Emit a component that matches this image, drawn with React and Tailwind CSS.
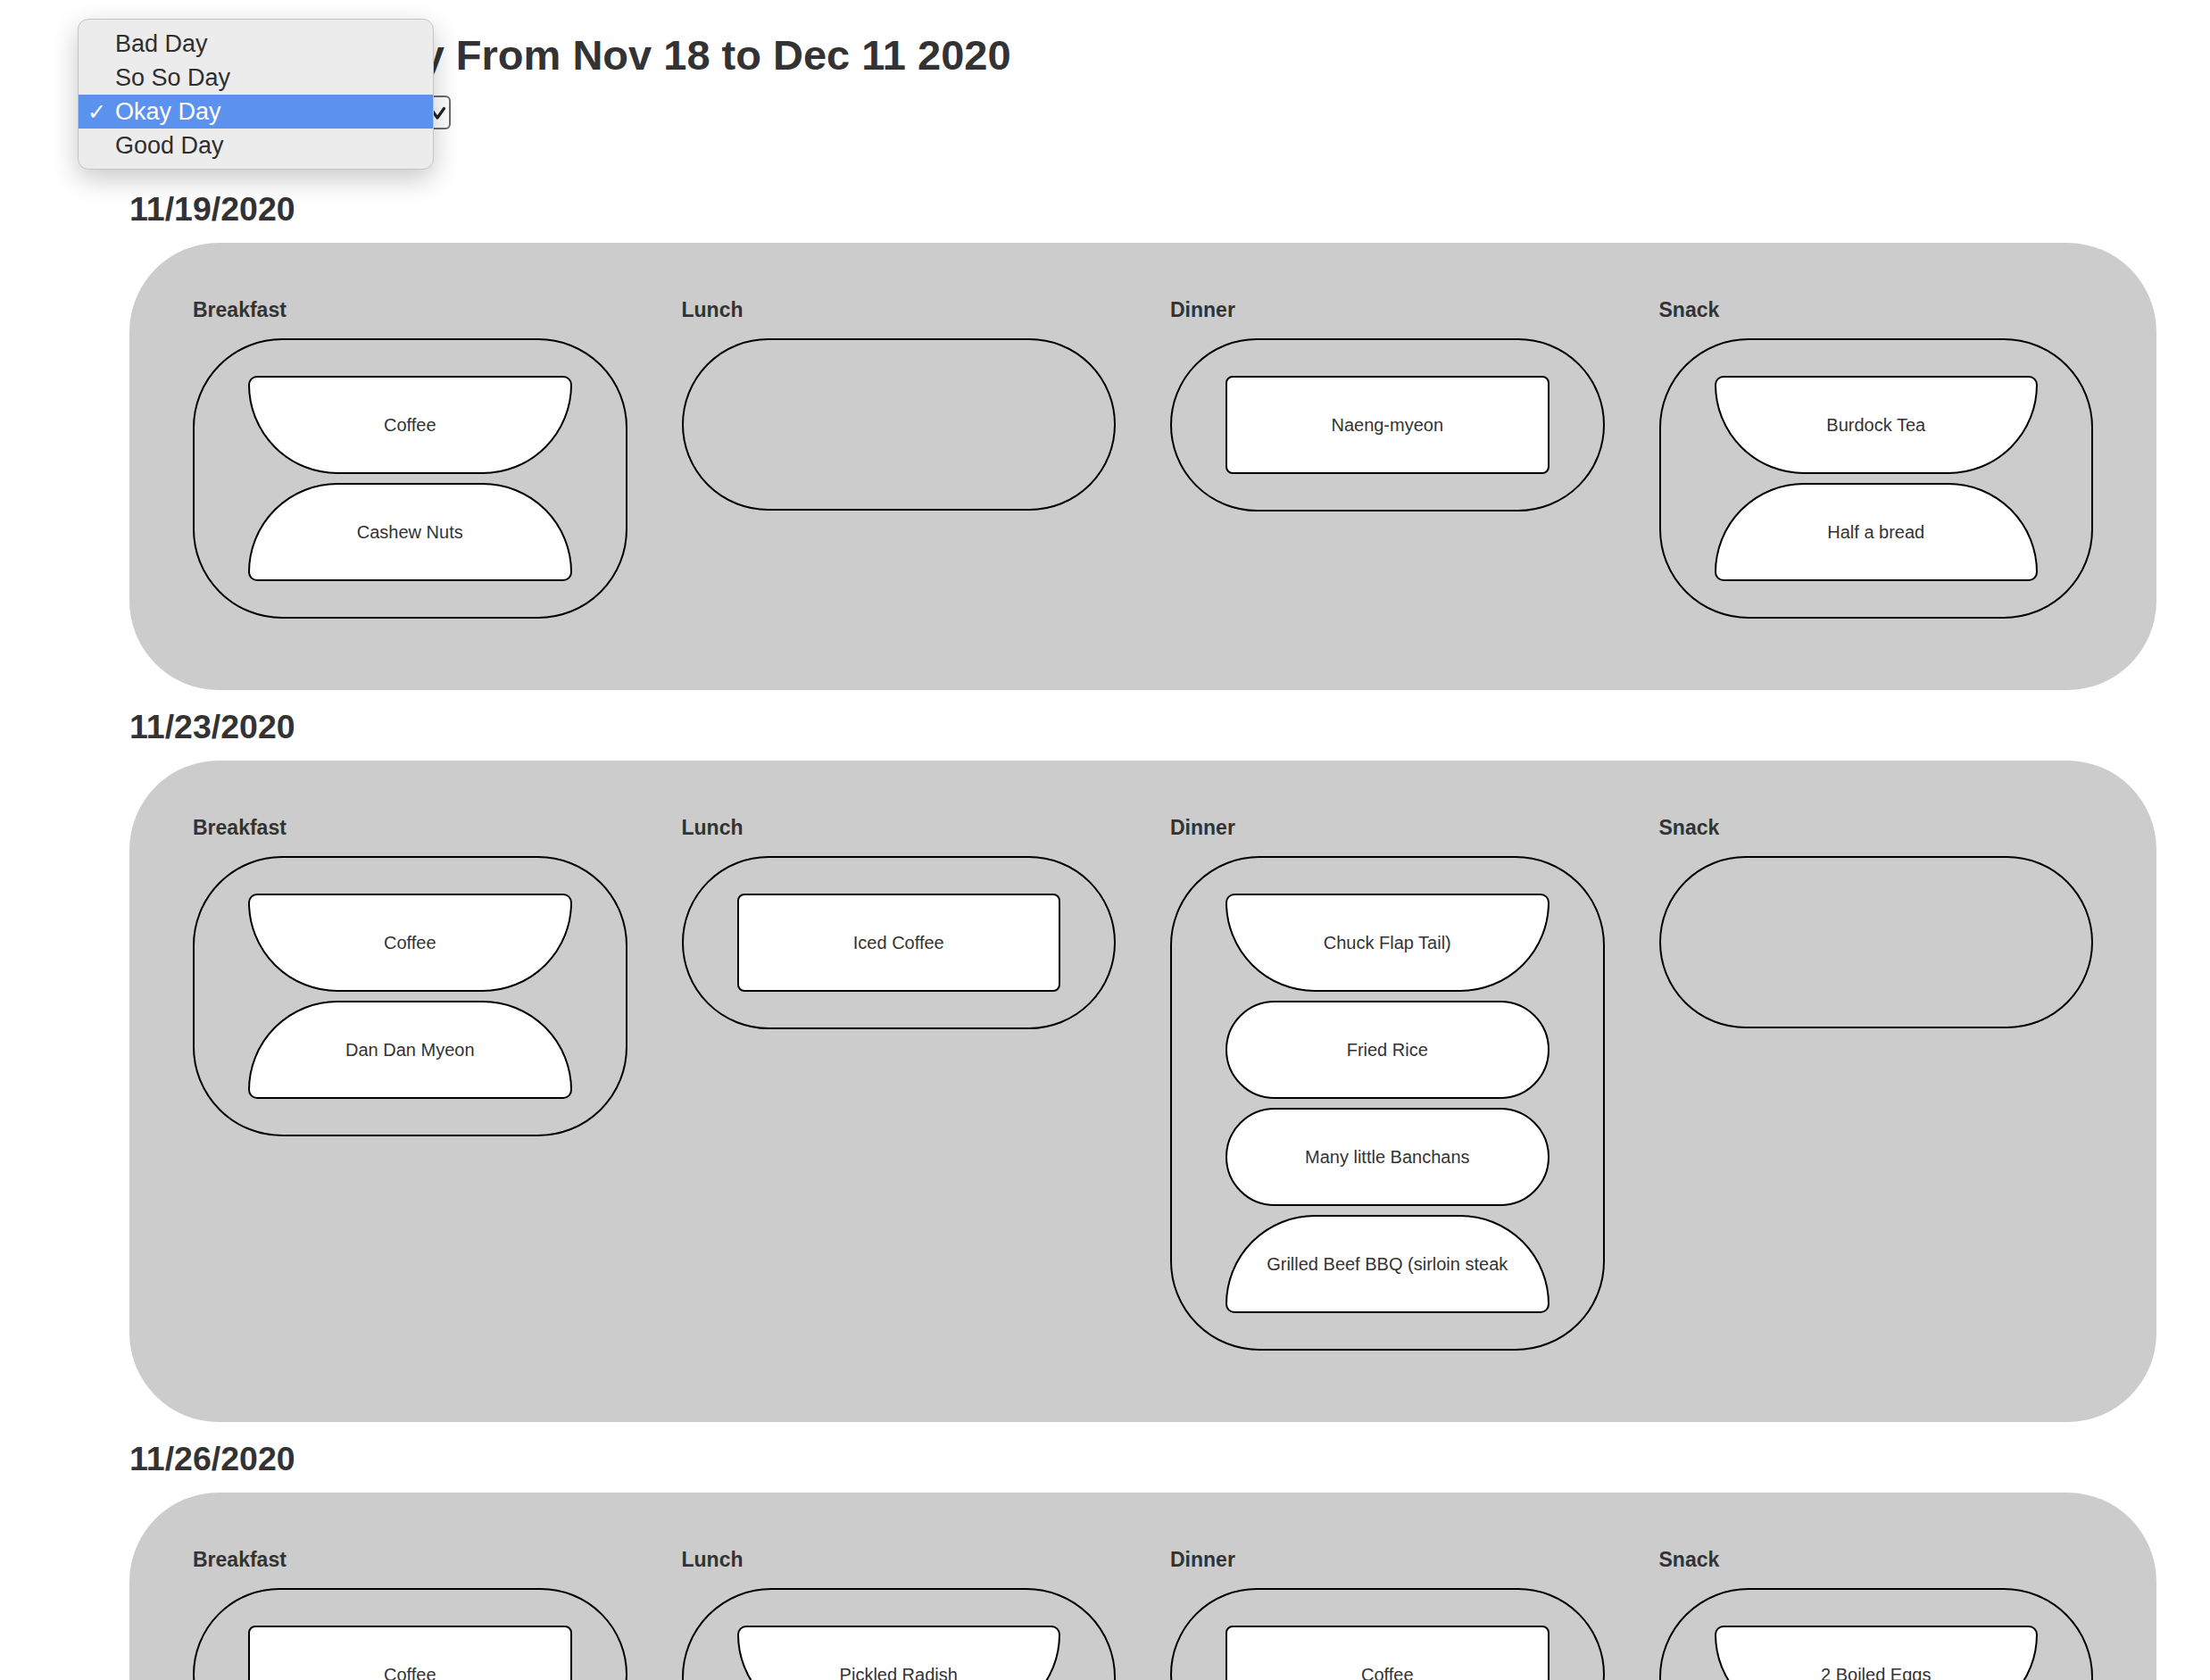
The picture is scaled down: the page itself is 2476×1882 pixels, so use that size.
import React from "react";

const days = [
  {
    date: "11/19/2020",
    meals: [
      { name: "Breakfast", items: ["Coffee", "Cashew Nuts"] },
      { name: "Lunch", items: [] },
      { name: "Dinner", items: ["Naeng-myeon"] },
      { name: "Snack", items: ["Burdock Tea", "Half a bread"] },
    ],
  },
  {
    date: "11/23/2020",
    meals: [
      { name: "Breakfast", items: ["Coffee", "Dan Dan Myeon"] },
      { name: "Lunch", items: ["Iced Coffee"] },
      {
        name: "Dinner",
        items: ["Chuck Flap Tail)", "Fried Rice", "Many little Banchans", "Grilled Beef BBQ (sirloin steak"],
      },
      { name: "Snack", items: [] },
    ],
  },
  {
    date: "11/26/2020",
    meals: [
      { name: "Breakfast", items: ["Coffee"] },
      { name: "Lunch", items: ["Pickled Radish", "Jjajangmyeon"] },
      { name: "Dinner", items: ["Coffee"] },
      { name: "Snack", items: ["2 Boiled Eggs", "Apple"] },
    ],
  },
];

function shapeClass(i, n) {
  if (n === 1) return "rounded-[8px]";
  if (i === 0) return "rounded-t-[10px] rounded-b-[100px]";
  if (i === n - 1) return "rounded-t-[100px] rounded-b-[10px]";
  return "rounded-[55px]";
}

function Meal({ meal }) {
  const n = meal.items.length;
  return (
    <div className="flex flex-col">
      <div className="text-[23px] font-bold leading-[28px] text-[#333333]">{meal.name}</div>
      <div className="mt-[18px] flex min-h-[193px] flex-col gap-[10px] rounded-[100px] border-2 border-black px-[60px] py-[40px]">
        {meal.items.map((it, i) => (
          <div
            key={i}
            className={
              "flex h-[110px] items-center justify-center border-2 border-black bg-white text-[20px] text-[#333333] " +
              shapeClass(i, n)
            }
          >
            {it}
          </div>
        ))}
      </div>
    </div>
  );
}

export default function App() {
  return (
    <div className="relative min-h-screen overflow-hidden bg-white font-['Liberation_Sans',Arial,sans-serif] text-[#333333]">
      <div className="pl-[145px] pr-[60px] pt-[35px]">
        <h2 className="ml-[29px] whitespace-nowrap text-[47px] font-bold leading-[54px]">
          My Food Diary From Nov 18 to Dec 11 2020
        </h2>
        <div className="relative mt-[18px] flex h-[38px] w-[360px] items-center rounded-[6px] border-2 border-[#6b6b6b] bg-white pl-[14px] text-[26px]">
          Okay Day
          <svg
            className="absolute left-[333px] top-[10px]"
            width="20"
            height="16"
            viewBox="0 0 20 16"
            fill="none"
          >
            <path d="M2.5 2.5 L10 13 L17.5 2.5" stroke="#222" strokeWidth="3.2" strokeLinecap="round" strokeLinejoin="round" />
          </svg>
        </div>

        {days.map((d, di) => (
          <section key={d.date}>
            <h3
              className={
                "mb-[17px] text-[37.5px] font-bold leading-[42px] text-[#333333] " +
                (di === 0 ? "mt-[68px]" : "mt-[20px]")
              }
            >
              {d.date}
            </h3>
            <div className="grid grid-cols-4 items-start gap-x-[61px] rounded-[100px] bg-[#cccccc] px-[71px] pb-[80px] pt-[61px]">
              {d.meals.map((m) => (
                <Meal key={m.name} meal={m} />
              ))}
            </div>
          </section>
        ))}
      </div>

      {/* open select menu */}
      <div className="absolute left-[87px] top-[21px] w-[399px] rounded-[12px] border border-[#c4c4c4] bg-[#ececec] pb-[7px] pt-[8px] shadow-[0_10px_30px_rgba(0,0,0,0.22)]">
        {["Bad Day", "So So Day", "Okay Day", "Good Day"].map((o) => {
          const sel = o === "Okay Day";
          return (
            <div
              key={o}
              className={
                "flex h-[38px] items-center text-[27px] leading-none " +
                (sel ? "bg-[#5b92ee] text-white" : "text-[#2f2f2f]")
              }
            >
              <span className="w-[41px] pl-[10px] text-[25px]">{sel ? "✓" : ""}</span>
              <span>{o}</span>
            </div>
          );
        })}
      </div>
    </div>
  );
}
